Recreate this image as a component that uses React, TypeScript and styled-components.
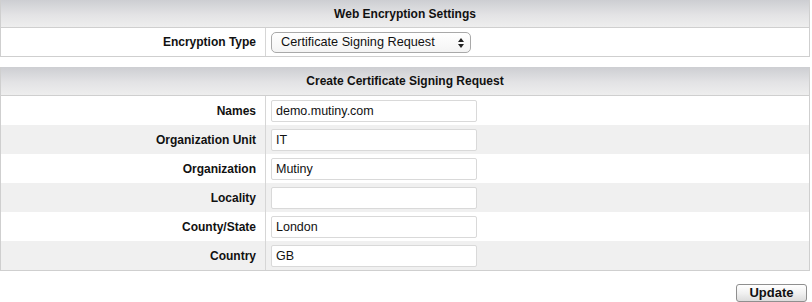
import { createGlobalStyle, styled } from 'styled-components';

const GlobalStyle = createGlobalStyle`
  body {
    margin: 0;
    background: #ffffff;
    font-family: "Liberation Sans", Arial, Helvetica, sans-serif;
    color: #111;
  }
`;

const Page = styled.div`
  width: 810px;
  display: flex;
  flex-direction: column;
  gap: 10px;
`;

const Panel = styled.section`
  border: 1px solid #cfcfcf;
  border-top: none;
  display: flex;
  flex-direction: column;
`;

const PanelHeader = styled.div<{ $height?: number }>`
  height: ${(p) => p.$height ?? 27}px;
  border-bottom: 1px solid #cfcfcf;
  background: linear-gradient(to bottom, #cdced2 0%, #e3e3e5 55%, #eeeeee 100%);
  display: flex;
  align-items: center;
  justify-content: center;
  font-size: 12px;
  font-weight: bold;
`;

const Row = styled.div<{ $shaded?: boolean; $height?: number }>`
  display: grid;
  grid-template-columns: 265px 1fr;
  height: ${(p) => p.$height ?? 29}px;
  background: ${(p) => (p.$shaded ? '#f0f0f0' : '#ffffff')};
`;

const Label = styled.div`
  display: flex;
  align-items: center;
  justify-content: flex-end;
  padding-right: 9px;
  border-right: 1px solid #d6d6d6;
  font-size: 12px;
  font-weight: bold;
`;

const Field = styled.div`
  display: flex;
  align-items: center;
  padding-left: 5px;
`;

const TextInput = styled.input`
  box-sizing: border-box;
  width: 206px;
  height: 22px;
  border: 1px solid #d9d9d9;
  border-radius: 2px;
  background: #fff;
  padding: 0 4px;
  font-family: "Liberation Sans", Arial, sans-serif;
  font-size: 12.5px;
  color: #111;
  outline: none;
`;

const SelectBox = styled.div`
  position: relative;
  box-sizing: border-box;
  width: 200px;
  height: 21px;
  border: 1px solid #a9a9a9;
  border-radius: 5px;
  background: linear-gradient(to bottom, #ffffff, #f4f4f4);
  display: flex;
  align-items: center;
  padding-left: 9px;
  font-size: 12.7px;
  color: #111;
`;

const Arrows = styled.svg`
  position: absolute;
  right: 6px;
  top: 5px;
`;

const Footer = styled.div`
  display: flex;
  justify-content: flex-end;
  padding: 13px 3px 0 0;
`;

const Button = styled.button`
  box-sizing: border-box;
  width: 71px;
  height: 18px;
  border: 1px solid #8f8f8f;
  border-radius: 3px;
  background: linear-gradient(to bottom, #ffffff 0%, #f1f1f1 50%, #dcdcdc 100%);
  font-family: "Liberation Sans", Arial, sans-serif;
  font-size: 13px;
  font-weight: bold;
  color: #111;
  padding: 0;
  line-height: 16px;
`;

const fields = [
  { label: 'Names', value: 'demo.mutiny.com' },
  { label: 'Organization Unit', value: 'IT' },
  { label: 'Organization', value: 'Mutiny' },
  { label: 'Locality', value: '' },
  { label: 'County/State', value: 'London' },
  { label: 'Country', value: 'GB' },
];

export default function App() {
  return (
    <>
      <GlobalStyle />
      <Page>
        <Panel>
          <PanelHeader>Web Encryption Settings</PanelHeader>
          <Row $height={28}>
            <Label>Encryption Type</Label>
            <Field>
              <SelectBox>
                Certificate Signing Request
                <Arrows width="6" height="10" viewBox="0 0 6 10">
                  <path d="M3 0 L6 4 L0 4 Z" fill="#222" />
                  <path d="M0 6 L6 6 L3 10 Z" fill="#222" />
                </Arrows>
              </SelectBox>
            </Field>
          </Row>
        </Panel>
        <div>
          <Panel>
            <PanelHeader $height={28}>Create Certificate Signing Request</PanelHeader>
            {fields.map((f, i) => (
              <Row key={f.label} $shaded={i % 2 === 1}>
                <Label>{f.label}</Label>
                <Field>
                  <TextInput defaultValue={f.value} />
                </Field>
              </Row>
            ))}
          </Panel>
          <Footer>
            <Button>Update</Button>
          </Footer>
        </div>
      </Page>
    </>
  );
}
